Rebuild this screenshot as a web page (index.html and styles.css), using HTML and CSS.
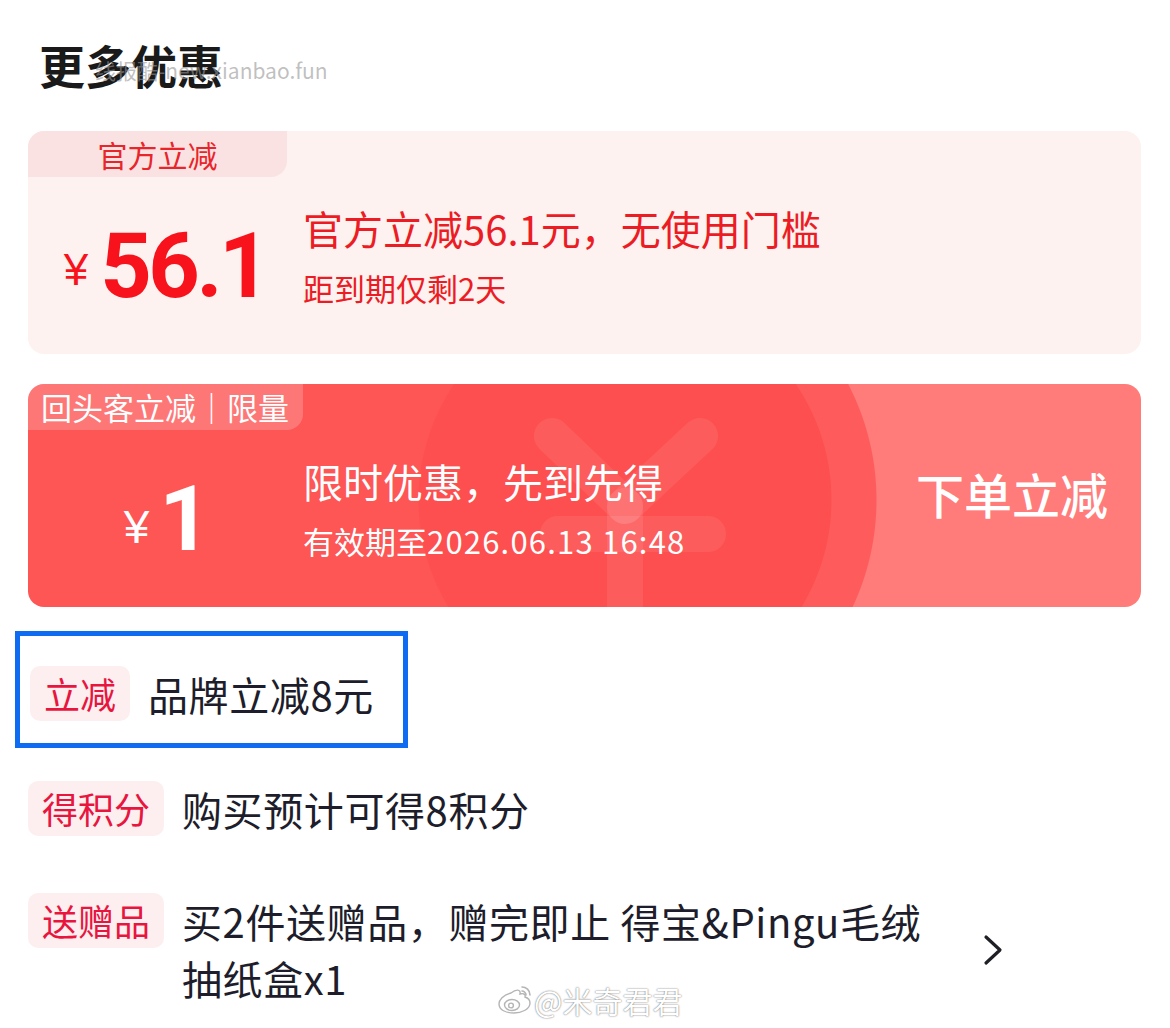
FILE: index.html
```html
<!DOCTYPE html>
<html lang="zh-CN">
<head>
<meta charset="utf-8">
<title>更多优惠</title>
<link rel="stylesheet" href="styles.css">
</head>
<body>
<div class="page">
  <h1 class="title">更多优惠</h1>
  <div class="wm-top">线报酷-new.xianbao.fun</div>

  <section class="card card-official">
    <div class="card-tag">官方立减</div>
    <div class="price"><span class="yen">¥</span><span class="num">56.1</span></div>
    <div class="info">
      <div class="info-main">官方立减56.1元，无使用门槛</div>
      <div class="info-sub">距到期仅剩2天</div>
    </div>
  </section>

  <section class="card card-return">
    <svg class="bg-yen" width="1113" height="223" viewBox="0 0 1113 223">
      <g stroke="#ffffff" stroke-opacity="0.08" stroke-width="36" stroke-linecap="round" fill="none">
        <line x1="524" y1="52" x2="597" y2="122"/>
        <line x1="672" y1="52" x2="597" y2="122"/>
        <line x1="597" y1="122" x2="597" y2="260"/>
        <line x1="530" y1="150" x2="680" y2="150"/>
      </g>
    </svg>
    <div class="card-tag tag-light">回头客立减｜限量</div>
    <div class="price price-white"><span class="yen yen-2">¥</span><span class="num">1</span></div>
    <div class="info info-white">
      <div class="info-main">限时优惠，先到先得</div>
      <div class="info-sub">有效期至<span class="digits">2026.06.13 16:48</span></div>
    </div>
    <div class="action">下单立减</div>
  </section>

  <div class="rows">
    <div class="highlight">
      <div class="row">
        <span class="chip">立减</span>
        <span class="row-text">品牌立减8元</span>
      </div>
    </div>
    <div class="row row-2">
      <span class="chip">得积分</span>
      <span class="row-text">购买预计可得8积分</span>
    </div>
    <div class="row row-3">
      <span class="chip">送赠品</span>
      <span class="row-text row-text-wide">买2件送赠品，赠完即止 得宝&amp;Pingu毛绒<br>抽纸盒x1</span>
      <svg class="chevron" width="20" height="32" viewBox="0 0 20 32">
        <polyline points="3,3 17,16 3,29" fill="none" stroke="#1f1f26" stroke-width="3.2" stroke-linecap="round" stroke-linejoin="round"/>
      </svg>
    </div>
  </div>

  <div class="wm-bottom">
    <svg class="weibo" width="36" height="30" viewBox="0 0 36 30">
      <g fill="#ffffff" stroke="#b5b5b5" stroke-width="1.4">
        <path d="M15 8c5-4 10-4 9 1c3-1 6 0 5 3c3 1 5 3 5 6c0 6-8 10-16 10C10 28 3 25 3 19c0-4 4-9 12-11z"/>
        <ellipse cx="16" cy="20" rx="7.5" ry="5.5"/>
        <circle cx="15" cy="20.5" r="2.4"/>
      </g>
      <g fill="none" stroke="#b5b5b5" stroke-width="1.6" stroke-linecap="round">
        <path d="M26 2c4 0 8 3 8 8"/>
        <path d="M26 6c2 0 4 2 4 4"/>
      </g>
    </svg>
    <span>@米奇君君</span>
  </div>
</div>
</body>
</html>
```

FILE: styles.css
```css
html, body {
  margin: 0;
  padding: 0;
  background: #ffffff;
}

body {
  font-family: "Noto Sans CJK SC", "Noto Sans", sans-serif;
  color: #1d1d2b;
}

.page {
  position: relative;
  width: 1170px;
  height: 1028px;
  box-sizing: border-box;
  padding: 0 29px 0 28px;
  overflow: hidden;
}

.title {
  margin: 0;
  padding: 32px 0 0 11px;
  font-size: 46px;
  line-height: 64px;
  font-weight: 700;
  color: #1a1a1a;
}

.wm-top {
  position: absolute;
  left: 95px;
  top: 58px;
  font-size: 21px;
  line-height: 24px;
  color: rgba(150, 150, 150, 0.6);
  white-space: nowrap;
}

.card {
  position: relative;
  height: 223px;
  border-radius: 16px;
  overflow: hidden;
  display: grid;
  grid-template-columns: 275px 1fr;
  grid-template-rows: 46px 1fr;
}

.card-official {
  margin-top: 35px;
  background: #fdf2f0;
}

.card-return {
  margin-top: 30px;
  grid-template-columns: 275px 1fr auto;
  background-color: #fe5555;
  background-image:
    radial-gradient(circle at 597px 116px, #fd4f4f 0 206px, rgba(253, 79, 79, 0) 207px),
    radial-gradient(circle at -3px 116px, #fe5c5c 0 251px, #ff7c7a 252px);
  background-repeat: no-repeat, no-repeat;
  background-position: 0 0, 600px 0;
  background-size: 100% 100%, 513px 100%;
}

.bg-yen {
  position: absolute;
  left: 0;
  top: 0;
  z-index: 0;
}

.card-tag {
  grid-column: 1 / 3;
  grid-row: 1;
  justify-self: start;
  width: 259px;
  height: 46px;
  line-height: 46px;
  text-align: center;
  font-size: 30px;
  color: #e8252b;
  background: #fbe2e2;
  border-bottom-right-radius: 16px;
}

.tag-light {
  position: relative;
  z-index: 1;
  width: 275px;
  box-sizing: border-box;
  text-align: left;
  padding-left: 13px;
  font-size: 31px;
  color: #ffffff;
  background: rgba(255, 255, 255, 0.2);
}

.price {
  grid-column: 1;
  grid-row: 2;
  align-self: center;
  text-align: center;
  white-space: nowrap;
  color: #f7121c;
  line-height: 90px;
  margin-top: 25px;
}

.price-white {
  position: relative;
  z-index: 1;
  color: #ffffff;
}

.yen {
  font-family: "Liberation Sans", Roboto, sans-serif;
  font-size: 44px;
  vertical-align: 12px;
  margin-right: 12px;
}

.yen-2 {
  font-size: 46px;
  vertical-align: 7px;
  margin-right: 10px;
}

.num {
  font-family: Roboto, "Liberation Sans", sans-serif;
  font-weight: 700;
  font-size: 90px;
  letter-spacing: -3.5px;
}

.info {
  grid-column: 2;
  grid-row: 2;
  align-self: center;
  margin-bottom: 21px;
  color: #ec1c25;
  white-space: nowrap;
}

.info-white {
  position: relative;
  z-index: 1;
  color: #ffffff;
}

.info-main {
  font-size: 40px;
  line-height: 52px;
}

.info-sub {
  margin-top: 14px;
  font-size: 31px;
  line-height: 40px;
}

.digits {
  letter-spacing: 1.2px;
}

.action {
  position: relative;
  z-index: 1;
  grid-column: 3;
  grid-row: 1 / 3;
  align-self: center;
  padding-right: 33px;
  margin-bottom: 6px;
  font-size: 48px;
  font-weight: 500;
  line-height: 60px;
  color: #ffffff;
}

.rows {
  margin-top: 24px;
}

.highlight {
  width: 393px;
  box-sizing: border-box;
  margin-left: -13px;
  border: 5px solid #0e6cf2;
  padding: 30px 0 20px 10px;
}

.row {
  display: flex;
  align-items: flex-start;
  gap: 18px;
}

.row-2 {
  margin-top: 33px;
}

.row-3 {
  margin-top: 55px;
}

.chip {
  flex: none;
  height: 55px;
  line-height: 55px;
  padding: 0 14px;
  font-size: 36px;
  color: #e8153f;
  background: #fdeff0;
  border-radius: 10px;
}

.row-text {
  font-size: 40px;
  line-height: 57px;
  color: #1d1d2b;
  white-space: nowrap;
  letter-spacing: 0.6px;
}

.row-text-wide {
  flex: 0 0 780px;
}

.chevron {
  flex: none;
  align-self: center;
  margin-left: 3px;
}

.wm-bottom {
  position: absolute;
  left: 496px;
  top: 981px;
  display: flex;
  align-items: center;
  gap: 2px;
  font-size: 30px;
  line-height: 38px;
  color: #ffffff;
  text-shadow: 0 0 2px rgba(0, 0, 0, 0.45), 0 0 1px rgba(0, 0, 0, 0.35);
  white-space: nowrap;
}
```
